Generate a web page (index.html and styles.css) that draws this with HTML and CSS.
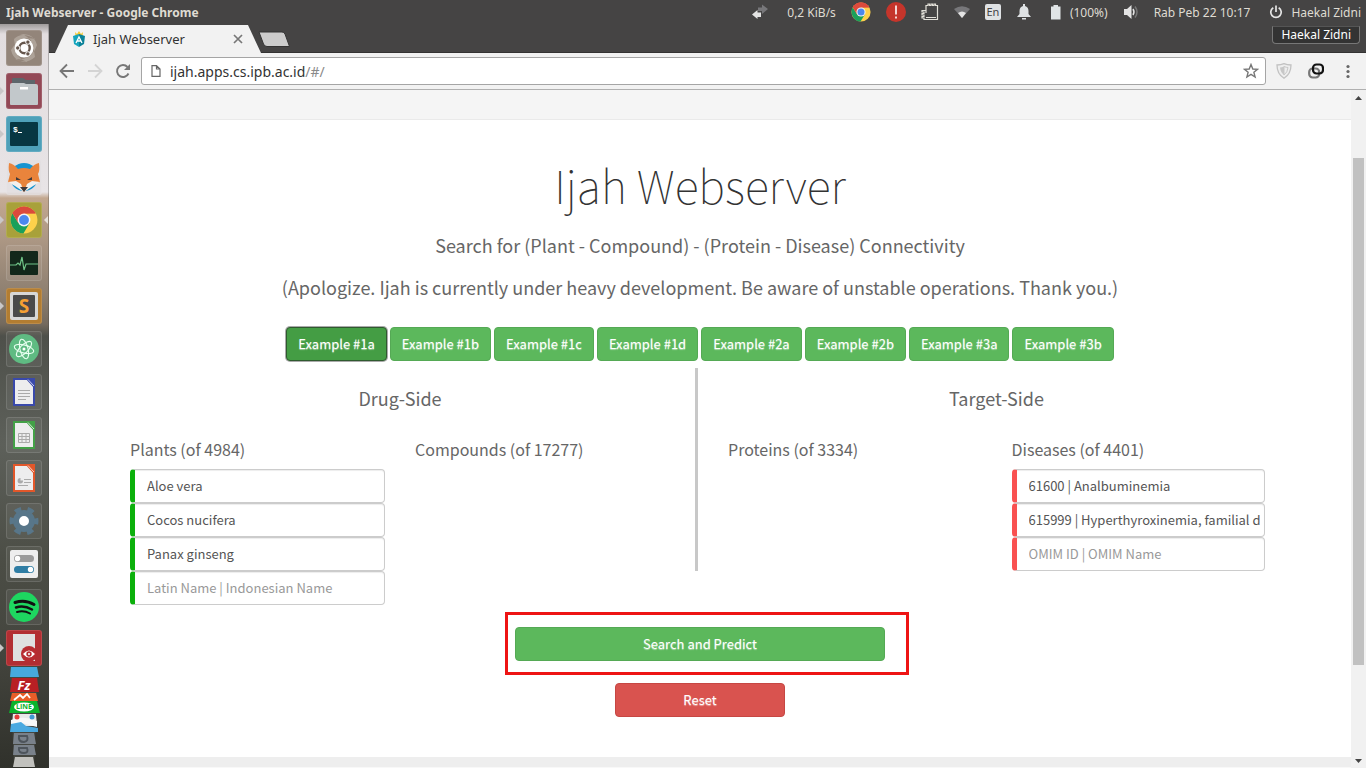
FILE: index.html
```html
<!DOCTYPE html>
<html lang="en">
<head>
<meta charset="utf-8">
<title>Ijah Webserver</title>
<link rel="stylesheet" href="styles.css">
</head>
<body>
<svg width="0" height="0" class="defs" aria-hidden="true">
  <defs>
    <symbol id="chrome" viewBox="0 0 48 48">
      <circle cx="24" cy="24" r="23" fill="#fdd14b"/>
      <path d="M24 24 4.100 12.500A23 23 0 0 1 43.900 12.500L24 13Z" fill="#db4a3c"/>
      <path d="M4.100 12.500A23 23 0 0 0 23 47L33.500 29.500 24 24 14.500 29.500Z" fill="#1aa05b"/>
      <path d="M4.100 12.500 14.500 29.500 24 24 24 13H44A23 23 0 0 0 4.100 12.500Z" fill="#db4a3c"/>
      <circle cx="24" cy="24" r="11" fill="#f4f4f4"/>
      <circle cx="24" cy="24" r="8.500" fill="#4a88ee"/>
    </symbol>
  </defs>
</svg>

<header class="panel">
  <span class="panel-title">Ijah Webserver - Google Chrome</span>
  <div class="indicators">
    <svg class="wide-icon" width="16" height="16" viewBox="0 0 16 16"><path d="M6 3.500H10V.500L16 5 10 10V7H6Z" fill="#77777a"/><path d="M0 10.500 5.500 6V8.500H9V13H5.500V15Z" fill="#e4e4e4"/></svg>
    <span>0,2 KiB/s</span>
    <svg width="20" height="20"><use href="#chrome"/></svg>
    <svg width="20" height="20" viewBox="0 0 20 20"><circle cx="10" cy="10" r="10" fill="#c5352b"/><path d="M10 3.500V12.500M10 14.500V16.500" stroke="#fff" stroke-width="1.600"/></svg>
    <svg width="18" height="18" viewBox="0 0 18 18"><path d="M5 10V2.500H7V1H8.500V2.500H10V1H11.500V2.500H13V1H14.500V2.500H16.500V16.500H3V15H1V13.500H3V12H1V10.500H3V9H1V7.500H5" fill="none" stroke="#e2e0d8" stroke-width="1.200"/><path d="M5 14.500H15" stroke="#e2e0d8"/></svg>
    <svg width="16" height="16" viewBox="0 0 16 16"><path d="M0 5Q8-.500 16 5L8 14Z" fill="#77777a"/><path d="M4 9Q8 6 12 9L8 14Z" fill="#e4e4e4"/></svg>
    <span class="lang">En</span>
    <svg width="16" height="16" viewBox="0 0 16 16"><path d="M7 0H9V2Q12.500 3 12.500 7V10L15 13H1L3.500 10V7Q3.500 3 7 2ZM6 14H10V15.500H6Z" fill="#dfe2e4"/></svg>
    <span class="battery"><svg width="12" height="16" viewBox="0 0 12 16"><path d="M3.500 1H8V2.500H10.500V15.500H1V2.500H3.500Z" fill="#e0e4e6"/></svg>(100%)</span>
    <svg width="16" height="16" viewBox="0 0 16 16"><path d="M1 5H4L8.500 1V15L4 11H1Z" fill="#e4e4e4"/><path d="M10 5Q12 8 10 11" fill="none" stroke="#e4e4e4" stroke-width="1.500"/><path d="M12 2.500Q16 8 12 13.500" fill="none" stroke="#777" stroke-width="1.500"/></svg>
    <span>Rab Peb 22 10:17</span>
    <span class="session"><svg width="14" height="14" viewBox="0 0 14 14"><path d="M4.300 2.800A5.200 5.200 0 1 0 9.700 2.800M7 .500V7" fill="none" stroke="#e4e4e4" stroke-width="1.700"/></svg>Haekal Zidni</span>
  </div>
</header>

<div class="desktop">
<nav class="launcher" aria-label="Launcher">
  <button class="tile t-dash" aria-label="Search"><svg viewBox="0 0 36 36"><path d="M5 20Q8 33 22 32Q9 29 9 14ZM31 15Q28 3 14 4Q28 7 28 22ZM8 9Q16 1 29 9Q16 6 9 16ZM29 27Q20 35 9 29Q22 31 28 21Z" fill="#cfc5bc" opacity=".45"/><circle cx="18" cy="18" r="9.500" fill="#fff"/><circle cx="18.500" cy="18" r="5.200" fill="none" stroke="#66564c" stroke-width="2.400"/><g fill="#66564c" stroke="#fff"><circle cx="11.700" cy="18" r="2.200"/><circle cx="21.900" cy="12.100" r="2.200"/><circle cx="21.900" cy="23.900" r="2.200"/></g></svg></button>
  <button class="tile t-files run" aria-label="Files"><svg viewBox="0 0 36 36"><path d="M6 15V6Q6 5 7 5H17L20 7H29V15Z" fill="#5d666b"/><path d="M4 12Q4 10 6 10H18L20 11H30Q32 11 32 13V31Q32 32 31 32H5Q4 32 4 31Z" fill="#c2c8cb"/><path d="M14 14H22V16.500H14Z" fill="#fff"/></svg></button>
  <button class="tile t-term run" aria-label="Terminal"><svg viewBox="0 0 36 36"><rect x="4" y="6" width="28" height="24" rx="1" fill="#073642"/><text x="7" y="16" class="term-text">$</text><path d="M12 16.500H16" stroke="#fff"/></svg></button>
  <button class="tile t-fox" aria-label="Firefox"><svg viewBox="0 0 36 36"><circle cx="18" cy="18" r="14" fill="#1594d1"/><path d="M3 4Q8 5 12 10Q18 8 24 10Q28 5 33 4Q34 12 32 15L34 23 27 26 18 33 9 26 2 23 4 15Q2 12 3 4Z" fill="#e9843c"/><path d="M2 23 10 22 15 25 18 33 9 27ZM34 23 26 22 21 25 18 33 27 27Z" fill="#f2f0ed"/><path d="M10 18 15 21H10ZM26 18 21 21H26ZM14 28H22L18 33Z" fill="#433b3b"/></svg></button>
  <button class="tile t-chrome run active" aria-label="Google Chrome"><svg viewBox="0 0 36 36"><use href="#chrome" x="4" y="4" width="28" height="28"/></svg></button>
  <button class="tile" aria-label="System Monitor"><svg viewBox="0 0 36 36"><rect x="4" y="6" width="28" height="24" rx="1" fill="#12271a"/><path d="M4 20H10L12 18 14 20 16 12 18 25 20 19H32" fill="none" stroke="#6fc487" stroke-width="1.200"/></svg></button>
  <button class="tile t-sublime run" aria-label="Sublime Text"><svg viewBox="0 0 36 36"><rect x="4" y="4" width="28" height="28" rx="2" fill="#d7d7d6"/><rect x="7" y="7" width="22" height="22" rx="1" fill="#4a4a4a"/><text x="18" y="25" text-anchor="middle" class="s-text">S</text></svg></button>
  <button class="tile" aria-label="Atom"><svg viewBox="0 0 36 36"><circle cx="18" cy="18" r="15" fill="#5fbb82"/><g fill="none" stroke="#e9fff1" stroke-width="1.100"><ellipse cx="18" cy="18" rx="10" ry="4" transform="rotate(15 18 18)"/><ellipse cx="18" cy="18" rx="10" ry="4" transform="rotate(75 18 18)"/><ellipse cx="18" cy="18" rx="10" ry="4" transform="rotate(135 18 18)"/></g><circle cx="18" cy="18" r="1.500" fill="#fff"/></svg></button>
  <button class="tile" aria-label="Writer"><svg viewBox="0 0 36 36"><path d="M8 5H28V31H8Z" fill="#ededee" stroke="#3949ab" stroke-width="2"/><path d="M19 4H29V15Z" fill="#3949ab"/><path d="M22 5.500 28 12" stroke="#c8cdf0"/><path d="M12 16.500H24M12 19.500H24M12 22.500H24M12 25.500H20" stroke="#aaa"/></svg></button>
  <button class="tile" aria-label="Calc"><svg viewBox="0 0 36 36"><path d="M8 5H28V31H8Z" fill="#ededee" stroke="#43a047" stroke-width="2"/><path d="M19 4H29V15Z" fill="#43a047"/><path d="M22 5.500 28 12" stroke="#d3efd4"/><path d="M12.500 16.500H23.500V25.500H12.500ZM12.500 19.500H23.500M12.500 22.500H23.500M16 16.500V25.500M20 16.500V25.500" fill="none" stroke="#aaa"/></svg></button>
  <button class="tile" aria-label="Impress"><svg viewBox="0 0 36 36"><path d="M8 5H28V31H8Z" fill="#ededee" stroke="#e2572a" stroke-width="2"/><path d="M19 4H29V15Z" fill="#e2572a"/><path d="M22 5.500 28 12" stroke="#fbd6c9"/><path d="M14.500 18V20.500H17A2.700 2.700 0 1 1 14.500 18Z" fill="#aaa"/><path d="M18 19.500H25M18 22.500H25M12 25.500H22" stroke="#aaa"/></svg></button>
  <button class="tile" aria-label="Settings"><svg viewBox="0 0 36 36"><circle cx="18" cy="18" r="8" fill="#fff" stroke="#587689" stroke-width="6"/><circle cx="18" cy="18" r="12" fill="none" stroke="#587689" stroke-width="5" stroke-dasharray="6.280 6.280" stroke-dashoffset="3.140"/></svg></button>
  <button class="tile" aria-label="Tweak Tool"><svg viewBox="0 0 36 36"><rect x="4" y="4" width="28" height="28" rx="2" fill="#eee"/><rect x="8" y="9" width="20" height="7" rx="3.500" fill="#9b9b9b"/><circle cx="11.500" cy="12.500" r="2.700" fill="#fff"/><rect x="8" y="20" width="20" height="7" rx="3.500" fill="#2f7da4"/><circle cx="24.500" cy="23.500" r="2.700" fill="#fff"/></svg></button>
  <button class="tile" aria-label="Spotify"><svg viewBox="0 0 36 36"><circle cx="18" cy="18" r="15" fill="#1ed760"/><g fill="none" stroke="#121212" stroke-linecap="round"><path d="M9 13.500Q19 10 28 15.500" stroke-width="3"/><path d="M10 18.500Q18 16 26 20.500" stroke-width="2.500"/><path d="M11 23Q18 21 24 24.500" stroke-width="2"/></g></svg></button>
  <div class="stack">
    <button class="tile t-viewer run" aria-label="Document Viewer"><svg viewBox="0 0 36 36"><path d="M7 4H29V31H7Z" fill="#dfe0e0"/><circle cx="23" cy="24" r="8" fill="#b82c31"/><path d="M17 24Q23 17 29 24Q23 31 17 24Z" fill="#fff"/><circle cx="23" cy="24" r="2.700" fill="#b82c31"/><circle cx="23" cy="24" r="1" fill="#fff"/></svg></button>
    <svg class="folded" width="36" height="101" viewBox="0 0 36 101">
      <path d="M4 0H32L28 101H8Z" fill="#454741"/>
      <path d="M5 1H31L33 11H4Z" fill="#47a9dd"/>
      <path d="M6 12H31L33 26H4Z" fill="#b81f24"/>
      <path d="M6 27H30L32 35H4Z" fill="#e95d28"/><path d="M8 34 14 29 17 32 21 28 24 32" stroke="#fff" stroke-width="1.800" fill="none"/>
      <path d="M6 35H31L34 47H3Z" fill="#0ab32b"/><ellipse cx="18" cy="41" rx="10" ry="4.500" fill="#fff"/>
      <path d="M7 48H30L31 60H6Z" fill="#e9e9e9"/><path d="M5 54Q18 49 31 55V61L16 57 5 61Z" fill="#f8f8f8"/><circle cx="11" cy="51" r="2.500" fill="#e73b3b"/><circle cx="26" cy="51" r="2.500" fill="#3f98d2"/>
      <path d="M5 58 15 56 20 60 32 62V66H4Z" fill="#4aa9e0"/>
      <path d="M8 67H28L30 78H7Z" fill="#79818a"/><path d="M13 70H21Q23 75 18 76Q12 76 13 70Z" fill="none" stroke="#4d545b" stroke-width="2"/>
      <path d="M8 79H28L30 89H7Z" fill="#79818a"/><path d="M13 82H21Q23 87 18 87Q12 87 13 82Z" fill="none" stroke="#4d545b" stroke-width="2"/>
      <path d="M9 91H27L29 101H7Z" fill="#c1c1bd"/>
      <text x="18" y="24" text-anchor="middle" class="fz">Fz</text>
      <text x="18" y="43" text-anchor="middle" class="line">LINE</text>
    </svg>
  </div>
</nav>

<div class="browser">
  <div class="tabstrip">
    <div class="tab-edge"><div class="tab">
      <svg width="14" height="16" viewBox="0 0 14 16"><path d="M3 1 5 3 7 0 9 3 11 1 10.500 5H3.500Z" fill="#f5c730"/><path d="M1 5 7 3V16L2 13Z" fill="#16a5bd"/><path d="M13 5 7 3V16L12 13Z" fill="#0b8298"/><path d="M4 12 7 6 10 12M5.500 10H8.500" fill="none" stroke="#fff" stroke-width="1.300"/></svg>
      <span class="tab-title">Ijah Webserver</span>
      <button class="plain" aria-label="Close tab"><svg width="10" height="10" viewBox="0 0 10 10"><path d="M1 1 9 9M9 1 1 9" stroke="#777" stroke-width="1.700"/></svg></button>
    </div></div>
    <button class="plain new-tab" aria-label="New tab"><svg width="34" height="17" viewBox="0 0 34 17"><path d="M2 1H25Q27 1 28 3L32.500 15.500H10Q7.500 15.500 6.500 13Z" fill="#ccc" stroke="#333"/></svg></button>
    <span class="profile">Haekal Zidni</span>
  </div>
  <div class="toolbar">
    <button class="plain" aria-label="Back"><svg width="16" height="16" viewBox="0 0 16 16"><path d="M15 8H2M8 1.500 1.500 8 8 14.500" fill="none" stroke="#777" stroke-width="1.800"/></svg></button>
    <button class="plain" aria-label="Forward"><svg width="16" height="16" viewBox="0 0 16 16"><path d="M1 8H14M8 1.500 14.500 8 8 14.500" fill="none" stroke="#d4d4d4" stroke-width="1.800"/></svg></button>
    <button class="plain" aria-label="Reload"><svg width="16" height="16" viewBox="0 0 16 16"><path d="M13.500 10.500A6 6 0 1 1 12.500 4" fill="none" stroke="#777" stroke-width="1.900"/><path d="M15 1V7H9Z" fill="#777"/></svg></button>
    <div class="omnibox">
      <svg width="10" height="12" viewBox="0 0 10 12"><path d="M1 .700H5.500L9 4V11.300H1ZM5.500 .700V4H9" fill="none" stroke="#666" stroke-width="1.200"/></svg>
      <a class="url" href="#/">ijah.apps.cs.ipb.ac.id<span class="path">/#/</span></a>
      <button class="plain" aria-label="Bookmark"><svg width="16" height="16" viewBox="0 0 16 16"><path d="M8 1.500 9.800 6 14.500 6.300 10.900 9.300 12.100 14 8 11.400 3.900 14 5.100 9.300 1.500 6.300 6.200 6Z" fill="none" stroke="#777" stroke-width="1.400"/></svg></button>
    </div>
    <div class="extensions">
      <button class="plain" aria-label="Shield"><svg width="16" height="16" viewBox="0 0 16 16"><path d="M8 .700Q11 2 15 2Q15 11 8 15.300Q1 11 1 2Q5 2 8 .700Z" fill="#eee" stroke="#c2c2c2" stroke-width="1.300"/><path d="M8 3.500Q5.500 4.500 4 4.500Q4.500 9.500 8 12Z" fill="#c7c7c7"/><path d="M8 3.500Q10.500 4.500 12 4.500Q11.500 9.500 8 12Z" fill="none" stroke="#c7c7c7"/></svg></button>
      <button class="plain" aria-label="Link extension"><svg width="16" height="16" viewBox="0 0 16 16"><rect x="1.200" y="5.500" width="10" height="9" rx="3.500" fill="none" stroke="#777" stroke-width="2.200"/><rect x="5" y="1.500" width="10" height="9" rx="3.500" fill="none" stroke="#111" stroke-width="2.200"/></svg></button>
      <button class="plain" aria-label="Menu"><svg width="16" height="16" viewBox="0 0 16 16"><g fill="#666"><circle cx="8" cy="3.500" r="1.600"/><circle cx="8" cy="8.500" r="1.600"/><circle cx="8" cy="13.500" r="1.600"/></g></svg></button>
    </div>
  </div>

  <div class="viewport">
    <div class="page">
      <div class="site-bar"></div>
      <main class="container">
        <h1>Ijah Webserver</h1>
        <p class="lead">Search for (Plant - Compound) - (Protein - Disease) Connectivity</p>
        <p class="lead">(Apologize. Ijah is currently under heavy development. Be aware of unstable operations. Thank you.)</p>
        <div class="examples">
          <button class="btn green pressed">Example #1a</button>
          <button class="btn green">Example #1b</button>
          <button class="btn green">Example #1c</button>
          <button class="btn green">Example #1d</button>
          <button class="btn green">Example #2a</button>
          <button class="btn green">Example #2b</button>
          <button class="btn green">Example #3a</button>
          <button class="btn green">Example #3b</button>
        </div>
        <div class="sides">
          <section class="side drug">
            <h2>Drug-Side</h2>
            <div class="fields">
              <div class="field plants">
                <h3 id="plants">Plants (of 4984)</h3>
                <input type="text" aria-labelledby="plants" value="Aloe vera">
                <input type="text" aria-labelledby="plants" value="Cocos nucifera">
                <input type="text" aria-labelledby="plants" value="Panax ginseng">
                <input type="text" aria-labelledby="plants" placeholder="Latin Name | Indonesian Name">
              </div>
              <div class="field"><h3>Compounds (of 17277)</h3></div>
            </div>
          </section>
          <section class="side target">
            <h2>Target-Side</h2>
            <div class="fields">
              <div class="field"><h3>Proteins (of 3334)</h3></div>
              <div class="field diseases">
                <h3 id="diseases">Diseases (of 4401)</h3>
                <input type="text" aria-labelledby="diseases" value="61600 | Analbuminemia">
                <input type="text" aria-labelledby="diseases" value="615999 | Hyperthyroxinemia, familial d">
                <input type="text" aria-labelledby="diseases" placeholder="OMIM ID | OMIM Name">
              </div>
            </div>
          </section>
        </div>
        <div class="actions">
          <div class="highlight"><button class="btn green search">Search and Predict</button></div>
          <button class="btn red reset">Reset</button>
        </div>
      </main>
      <footer class="site-foot"></footer>
    </div>
    <div class="scrollbar" aria-hidden="true">
      <svg width="7" height="4" viewBox="0 0 7 4"><path d="M0 4 3.500 0 7 4Z" fill="#444"/></svg>
      <div class="track"><div class="thumb"></div></div>
      <svg width="7" height="4" viewBox="0 0 7 4"><path d="M0 0 3.500 4 7 0Z" fill="#444"/></svg>
    </div>
  </div>
</div>
</div>
</body>
</html>
```
FILE: styles.css
```css
* { box-sizing: border-box; }
body {
  margin: 0;
  min-height: 100vh;
  display: flex;
  flex-direction: column;
  font-family: "Noto Sans", sans-serif;
  font-size: 12px;
  color: #333;
}
svg { display: block; flex: none; }
.defs { position: absolute; }
button { font: inherit; cursor: pointer; }
.plain { border: 0; background: none; padding: 0; }

/* Desktop panel */
.panel {
  height: 24px;
  display: flex;
  align-items: center;
  justify-content: space-between;
  padding: 0 5px 0 6px;
  background: #454444;
  color: #dfdbd2;
  white-space: nowrap;
}
.panel-title { font-weight: 700; }
.indicators { display: flex; align-items: center; gap: 15px; }
.wide-icon { margin-right: 4px; }
.battery, .session { display: flex; align-items: center; gap: 8px; }
.battery { padding-left: 3px; }
.session { padding-left: 4px; }
.lang {
  width: 16px;
  height: 16px;
  border-radius: 2px;
  background: #dfe2e4;
  color: #444;
  font-size: 11px;
  line-height: 16px;
  text-align: center;
}

.desktop { flex: 1; display: flex; }

/* Launcher */
.launcher {
  width: 49px;
  padding: 6px 0 0 6px;
  display: flex;
  flex-direction: column;
  gap: 7px;
  border-right: 1px solid rgba(60, 60, 60, .3);
  background: linear-gradient(#9f9b9b 0, #e2dddf 10px, #e8e4e6 168px, #c3a890 174px, #ac9784 215px, #8d7f70 270px, #746a5e 300px, #4e504a 312px, #5d605a 420px, #4b4d45 540px, #45463f 620px, #30312b 744px);
}
.tile {
  position: relative;
  display: block;
  width: 36px;
  height: 36px;
  padding: 0;
  border: 0;
  border-radius: 3px;
  background: rgba(255, 255, 255, .06);
  box-shadow: inset 0 0 0 1px rgba(255, 255, 255, .12);
}
.t-dash { background: #93857a; }
.t-files { background: #934856; }
.t-term { background: #4ea0b9; }
.t-fox { background: rgba(225, 222, 224, .6); }
.t-chrome { background: #a8a13a; }
.t-sublime { background: #b37d31; }
.t-viewer { background: #b22e32; }
.run::before {
  content: "";
  position: absolute;
  left: -6px;
  top: 14px;
  border: 4px solid transparent;
  border-left-color: #c9c7c8;
  border-right: 0;
}
.active::after {
  content: "";
  position: absolute;
  right: -6px;
  top: 14px;
  border: 4px solid transparent;
  border-right-color: #e5e0d8;
  border-left: 0;
}
.stack { margin-top: -2px; }
.term-text { font: 700 8px "Liberation Mono", monospace; fill: #fff; }
.s-text { font: 700 19px "Open Sans", sans-serif; fill: #f5a033; }
.fz { font: italic 700 13px "Open Sans", sans-serif; fill: #fff; }
.line { font: 700 7px "Open Sans", sans-serif; fill: #0ab32b; }

/* Browser chrome */
.browser { flex: 1; min-width: 0; display: flex; flex-direction: column; }
.tabstrip {
  height: 29px;
  display: flex;
  align-items: flex-end;
  padding: 0 6px;
  background: #454444;
  border-bottom: 1px solid #343333;
}
.tab-edge {
  width: 206px;
  height: 28px;
  margin-bottom: -1px;
  clip-path: polygon(0 100%, 13px 0, calc(100% - 13px) 0, 100% 100%);
}
.tab {
  height: 100%;
  display: flex;
  align-items: center;
  gap: 7px;
  padding: 0 18px 0 17px;
  background: #f2f2f2;
}
.tab-title { flex: 1; font-size: 13px; }
.new-tab { margin: 0 auto 4px -4px; }
.profile {
  align-self: flex-start;
  margin-top: 2px;
  padding: 0 8px;
  border: 1px solid #777;
  border-top-color: #555;
  border-radius: 0 0 4px 4px;
  background: #333;
  color: #fff;
  line-height: 16px;
}
.toolbar {
  height: 37px;
  display: flex;
  align-items: center;
  gap: 12px;
  padding: 0 10px;
  background: #f2f2f2;
  border-bottom: 1px solid #b0b0b0;
}
.omnibox {
  flex: 1;
  height: 28px;
  margin: 0 -2px;
  display: flex;
  align-items: center;
  gap: 9px;
  padding: 0 6px 0 9px;
  background: #fff;
  border: 1px solid #a5a5a5;
  border-radius: 3px;
}
.url { flex: 1; font-size: 14px; color: #333; text-decoration: none; }
.path { color: #8a8a8a; }
.extensions { display: flex; gap: 16px; }

/* Page viewport */
.viewport { flex: 1; display: flex; }
.page {
  flex: 1;
  min-width: 0;
  display: flex;
  flex-direction: column;
  background: #fff;
  font-family: "Noto Sans CJK SC", sans-serif;
  font-size: 13px;
  color: #666;
}
.site-bar { height: 30px; background: #f5f5f5; border-bottom: 1px solid #eaeaea; }
.container {
  flex: 1;
  width: 100%;
  max-width: 1140px;
  margin: 0 auto;
  padding: 33px 0 40px;
}
h1 {
  margin: 0 0 13px;
  font-size: 45px;
  font-weight: 100;
  line-height: 64px;
  text-align: center;
  color: #333;
}
.lead { margin: 0 0 12px; font-size: 18px; line-height: 30px; text-align: center; }
.examples {
  display: flex;
  justify-content: center;
  gap: 3px;
  margin-top: 25px;
}
.btn {
  height: 34px;
  padding: 0 11px 2px;
  border: 1px solid;
  border-radius: 4px;
  color: #fff;
  text-shadow: 0 1px 1px rgba(255, 255, 255, .5);
  white-space: nowrap;
}
.green { background: #5cb85c; border-color: #55a955; }
.red { background: #d9534f; border-color: #c64743; }
.pressed { background: #449d44; border-color: #2f5a2f; box-shadow: 0 0 0 1px #aaa; }
.sides {
  display: grid;
  grid-template-columns: 565fr 575fr;
  align-items: start;
  margin-top: 7px;
}
.side { padding-top: 15px; }
.drug { padding-right: 25px; }
.target { padding-left: 30px; padding-right: 5px; border-left: 3px solid #c8c8c8; }
h2 { margin: 0 0 23px; font-size: 18px; font-weight: 400; line-height: 30px; text-align: center; }
.fields { display: grid; grid-template-columns: 1fr 1fr; gap: 30px; }
h3 { margin: 0 0 7px; font-size: 16px; font-weight: 400; line-height: 26px; }
.field input {
  display: block;
  width: 100%;
  height: 34px;
  padding: 0 2px 2px 12px;
  border: 1px solid #ccc;
  border-left-width: 5px;
  border-radius: 4px;
  background: #fff;
  box-shadow: inset 0 1px 1px rgba(0, 0, 0, .075);
  font: inherit;
  color: #555;
}
.field input::placeholder { color: #999; opacity: 1; }
.plants input { border-left-color: #0bb00b; }
.diseases input { border-left-color: #f95151; }
.actions {
  display: flex;
  flex-direction: column;
  align-items: center;
  gap: 22px;
  margin-top: 22px;
}
.highlight { position: relative; width: 370px; max-width: 100%; }
.highlight::after {
  content: "";
  position: absolute;
  inset: -15px -24px -14px -10px;
  border: 3px solid #ee1414;
  pointer-events: none;
}
.search { display: block; width: 100%; }
.reset { width: 170px; }
.site-foot { height: 11px; background: #eee; border-bottom: 1px solid #f8f8f8; }

.scrollbar {
  width: 15px;
  display: flex;
  flex-direction: column;
  align-items: center;
  gap: 4px;
  padding: 6px 0 5px;
  background: #f1f1f1;
}
.track { flex: 1; width: 11px; padding-top: 54px; }
.thumb { height: 85%; min-height: 40px; background: #c1c1c1; }
```
